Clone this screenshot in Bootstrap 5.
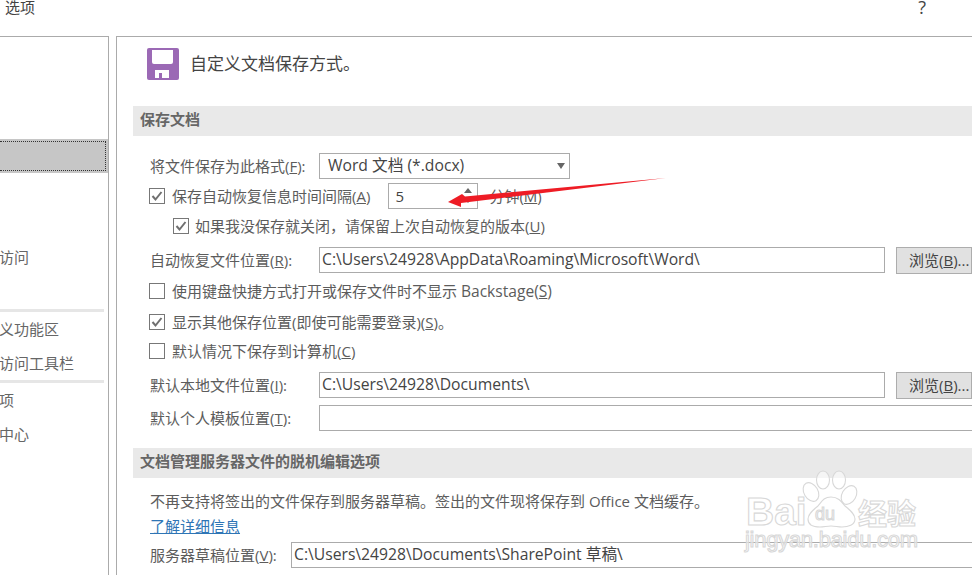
<!DOCTYPE html>
<html lang="zh-CN">
<head>
<meta charset="utf-8">
<title>选项</title>
<link href="https://cdn.jsdelivr.net/npm/bootstrap@5.3.0/dist/css/bootstrap.min.css" rel="stylesheet">
<style>
html,body{height:575px;overflow:hidden}
body{position:relative;background:#fff;color:#555;font:15px/20px "Open Sans","Noto Sans CJK SC",sans-serif}
.dlg-title{height:36px;padding-left:5px;padding-right:46px;line-height:15px;color:#444}
.dlg-help{font-size:18px}
.dlg-main{height:539px}
.nav-pane{width:109px;flex:none;border-top:1px solid #ababab;border-right:1px solid #ababab;margin-right:7px;color:#666}
.nav-item-row{height:34px;line-height:34px;margin-left:-1px}
.nav-sel{height:34px;margin-top:102px;background:#c6c6c6;padding:2px 2px 2px 0}
.nav-sel-in{height:100%;border:1px dotted #333;border-left:0}
.nav-sep{height:3px;width:104px;background:#e6e6e6}
.sp-67{margin-top:67px}
.sp-35{margin-top:35px}
.opt-pane{min-width:0;flex:1;border-top:1px solid #ababab;border-left:1px solid #ababab;overflow:hidden}
.opt-head{margin:11px 0 0 30px;height:32px;font-size:17px;color:#444}
.opt-title{margin-left:3px;margin-top:-1px}
.opt-bar{margin-left:16px;height:30px;line-height:27px;padding-left:7px;background:#e9e9e9;color:#666;font-weight:700}
.opt-bar-first{margin-top:26px}
.opt-form{padding-left:32px}
.opt-row{height:26px}
.opt-label{padding-left:1px;flex:none;width:170px;color:#5c5c5c}
.opt-label-short{width:142px}
.opt-field.form-control,.opt-field.form-select{height:26px;padding:0 0 0 2px;border:1px solid #ababab;border-radius:0;font-size:15.7px;line-height:23px;color:#444;background-color:#fff;white-space:nowrap;overflow:hidden}
.opt-field.form-select{width:251px;flex:none;padding-left:8px;background-image:none;position:relative}
.sel-caret{position:absolute;right:4px;top:9px;width:0;height:0;border:4.5px solid transparent;border-top:6px solid #666;border-bottom:0}
.opt-grow{flex:1;min-width:0}
.opt-over{margin-right:-6px}
.opt-browse.btn{flex:none;width:76px;height:27px;margin-left:11px;padding:0 0 0 12px;text-align:left;border:1px solid #adadad;border-radius:0;background:#e1e1e1;color:#444;font-size:15px;line-height:24px;white-space:nowrap;overflow:hidden}
.opt-check.form-check-input{flex:none;width:16px;height:16px;margin:0;border:1px solid #777;border-radius:0;background-color:#fff;opacity:1}
.opt-check.form-check-input:checked{background-color:#fff;border-color:#777;background-size:14px 14px;background-image:url("data:image/svg+xml,%3csvg xmlns='http://www.w3.org/2000/svg' viewBox='0 0 14 14'%3e%3cpath fill='none' stroke='%23707070' stroke-width='2' d='M2.5 7l3 3.5 6-7.5'/%3e%3c/svg%3e")}
.opt-check-text{margin-left:7px;color:#5c5c5c;white-space:nowrap}
.opt-sub{padding-left:24px}
.opt-sub .opt-check-text{margin-left:6px}
.opt-spin{flex:none;width:90px;height:26px;margin-left:18px;margin-right:11px;border:1px solid #ababab;padding-left:6px;line-height:25px;color:#444;position:relative}
.spin-up,.spin-down{position:absolute;right:5px;width:0;height:0;border:4px solid transparent}
.spin-up{top:4px;border-bottom:5px solid #666;border-top:0}
.spin-down{top:14px;border-top:5px solid #666;border-bottom:0}
.opt-lat{font-size:15.6px}
.sp-17{margin-top:17px}
.sp-8{margin-top:8px}
.sp-5{margin-top:5px}
.sp-3{margin-top:3px}
.sp-7{margin-top:7px}
.sp-10{margin-top:10px}
.opt-note{height:26px;line-height:26px;padding-left:1px;color:#5c5c5c;white-space:nowrap}
.opt-link-row{height:25px;line-height:25px;padding-left:1px}
.opt-link{color:#2e75b5}
.shot-arrow{position:absolute;left:440px;top:170px;pointer-events:none}
.shot-mark{position:absolute;left:740px;top:465px;pointer-events:none}
.shot-mark text{fill:rgba(255,255,255,.55);stroke:#d8d8d8;stroke-width:1.1}
</style>
</head>
<body>
<div class="dlg-title d-flex justify-content-between align-items-start">
  <span>选项</span><span class="dlg-help">?</span>
</div>
<div class="dlg-main d-flex">
  <div class="nav-pane">
    <div class="nav-sel"><div class="nav-sel-in"></div></div>
    <div class="nav-item-row sp-67">访问</div>
    <div class="nav-sep sp-35"></div>
    <div class="nav-item-row">义功能区</div>
    <div class="nav-item-row">访问工具栏</div>
    <div class="nav-sep"></div>
    <div class="nav-item-row">项</div>
    <div class="nav-item-row">中心</div>
  </div>
  <div class="opt-pane">
    <div class="opt-head d-flex align-items-center gap-2">
      <svg width="32" height="32" viewBox="0 0 32 32"><rect width="32" height="32" rx="2" fill="#9b69b5"/><path d="M5 2h21v12a2 2 0 0 1-2 2H7a2 2 0 0 1-2-2z" fill="#fff"/><path d="M8 22h14v8H8z" fill="#fff"/><path d="M12 25h3v5h-3z" fill="#9b69b5"/></svg>
      <span class="opt-title">自定义文档保存方式。</span>
    </div>
    <div class="opt-bar opt-bar-first">保存文档</div>
    <div class="opt-form">
      <div class="opt-row d-flex align-items-center sp-17">
        <span class="opt-label">将文件保存为此格式(<u>F</u>):</span>
        <div class="opt-field form-select">Word 文档 (*.docx)<span class="sel-caret"></span></div>
      </div>
      <div class="opt-row d-flex align-items-center mt-1">
        <input class="opt-check form-check-input" type="checkbox" checked>
        <span class="opt-check-text">保存自动恢复信息时间间隔(<u>A</u>)</span>
        <div class="opt-spin">5<span class="spin-up"></span><span class="spin-down"></span></div>
        <span class="opt-check-text ms-0">分钟(<u>M</u>)</span>
      </div>
      <div class="opt-row opt-sub d-flex align-items-center mt-1">
        <input class="opt-check form-check-input" type="checkbox" checked>
        <span class="opt-check-text">如果我没保存就关闭，请保留上次自动恢复的版本(<u>U</u>)</span>
      </div>
      <div class="opt-row d-flex align-items-center sp-8">
        <span class="opt-label">自动恢复文件位置(<u>R</u>):</span>
        <div class="opt-field form-control opt-grow">C:\Users\24928\AppData\Roaming\Microsoft\Word\</div>
        <button class="opt-browse btn" type="button">浏览(<u>B</u>)...</button>
      </div>
      <div class="opt-row d-flex align-items-center sp-5">
        <input class="opt-check form-check-input" type="checkbox">
        <span class="opt-check-text">使用键盘快捷方式打开或保存文件时不显示 <span class="opt-lat">Backstage(<u>S</u>)</span></span>
      </div>
      <div class="opt-row d-flex align-items-center sp-5">
        <input class="opt-check form-check-input" type="checkbox" checked>
        <span class="opt-check-text">显示其他保存位置(即使可能需要登录)(<u>S</u>)。</span>
      </div>
      <div class="opt-row d-flex align-items-center sp-3">
        <input class="opt-check form-check-input" type="checkbox">
        <span class="opt-check-text">默认情况下保存到计算机(<u>C</u>)</span>
      </div>
      <div class="opt-row d-flex align-items-center sp-8">
        <span class="opt-label">默认本地文件位置(<u>I</u>):</span>
        <div class="opt-field form-control opt-grow">C:\Users\24928\Documents\</div>
        <button class="opt-browse btn" type="button">浏览(<u>B</u>)...</button>
      </div>
      <div class="opt-row d-flex align-items-center sp-7">
        <span class="opt-label">默认个人模板位置(<u>T</u>):</span>
        <div class="opt-field form-control opt-grow opt-over"></div>
      </div>
    </div>
    <div class="opt-bar sp-17">文档管理服务器文件的脱机编辑选项</div>
    <div class="opt-form">
      <div class="opt-note sp-10">不再支持将签出的文件保存到服务器草稿。签出的文件现将保存到 Office 文档缓存。</div>
      <div class="opt-link-row"><a class="opt-link" href="#">了解详细信息</a></div>
      <div class="opt-row d-flex align-items-center sp-3">
        <span class="opt-label opt-label-short">服务器草稿位置(<u>V</u>):</span>
        <div class="opt-field form-control opt-grow opt-over">C:\Users\24928\Documents\SharePoint 草稿\</div>
      </div>
    </div>
  </div>
</div>
<svg class="shot-arrow" width="240" height="45" viewBox="440 170 240 45"><polygon points="666,178 465,196.5 462,194 448,202 461,207 461,203" fill="#ee1c25"/></svg>
<svg class="shot-mark" width="185" height="95" viewBox="740 465 185 95">
  <g fill="rgba(255,255,255,.55)" stroke="#d8d8d8" stroke-width="1.1">
    <ellipse cx="811" cy="492" rx="7" ry="10" transform="rotate(-30 811 492)"/>
    <ellipse cx="823" cy="480" rx="6.5" ry="9"/>
    <ellipse cx="839" cy="480" rx="6.5" ry="9"/>
    <ellipse cx="849" cy="495" rx="7" ry="10" transform="rotate(30 849 495)"/>
    <path d="M831 497c7 0 10 4 14 9 5 4 10 8 10 13 0 6-7 8-13 8-4 0-7-1-11-1s-7 1-11 1c-6 0-12-2-12-8 0-5 5-9 10-13 4-5 6-9 13-9z"/>
  </g>
  <text x="746" y="525" font-family="Liberation Sans" font-weight="700" font-size="39">Bai</text>
  <text x="815" y="520" font-family="Liberation Sans" font-size="18">du</text>
  <text x="858" y="525" font-family="Noto Sans CJK SC" font-weight="700" font-size="29">经验</text>
  <text x="745" y="547" font-family="Liberation Sans" font-size="22" textLength="173">jingyan.baidu.com</text>
</svg>
<script src="https://cdn.jsdelivr.net/npm/bootstrap@5.3.0/dist/js/bootstrap.bundle.min.js"></script>
</body>
</html>
